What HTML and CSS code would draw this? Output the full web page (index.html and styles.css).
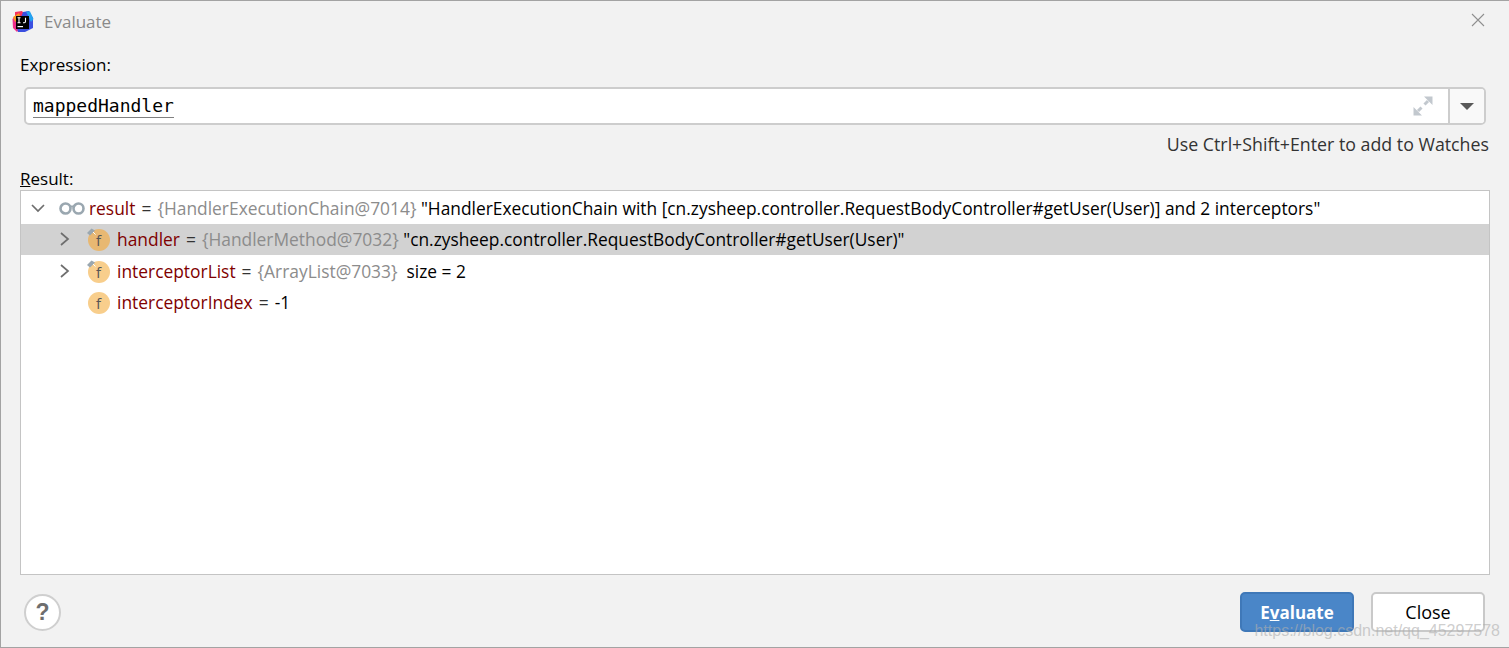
FILE: index.html
```html
<!DOCTYPE html>
<html lang="en">
<head>
<meta charset="utf-8">
<title>Evaluate</title>
<link rel="stylesheet" href="styles.css">
</head>
<body>
<div class="dialog">
  <header class="titlebar">
    <svg class="logo" width="22" height="22" viewBox="0 0 22 22">
      <path d="M3 1 L10 0 L13 4 L3 8Z" fill="#f5305f"/>
      <path d="M0.5 8 L4 4 L8 17 L5 21 L1 17Z" fill="#ee2f8a"/>
      <path d="M11 1 L17 0 L21 7 L21 17 L13 21 L6 21 L5 17Z" fill="#3b4fe0"/>
      <path d="M14 0.5 L18 0.5 L21.5 8 L19 11Z" fill="#23a3f0"/>
      <path d="M1 6 L7 2 L9 7 L3 11Z" fill="#f7941e"/>
      <rect x="4" y="5" width="13" height="13" fill="#000"/>
      <rect x="5.5" y="15" width="5.5" height="1.2" fill="#fff"/>
      <path d="M5.5 6.8h3M7 6.8v5M5.5 11.8h3M13.5 6.8v3.8q0 1.2-1.2 1.2h-1.3" fill="none" stroke="#fff" stroke-width="1.1"/>
    </svg>
    <span class="title">Evaluate</span>
    <svg class="close-x" width="14" height="14" viewBox="0 0 14 14"><path d="M1 1L13 13M13 1L1 13" stroke="#8f8f8f" stroke-width="1.1" fill="none"/></svg>
  </header>

  <main class="content">
    <label class="label expr-label">Expression:</label>
    <div class="expr-box">
      <div class="expr-input">
        <span class="expr-text">mappedHandler</span>
        <svg class="expand" width="20" height="20" viewBox="0 0 20 20">
          <path d="M11 0.5h8.500v8.500z M9 19.500h-8.500v-8.500z" fill="#c2c8ce"/>
          <path d="M15 5L11.500 8.500M5 15L8.500 11.500" stroke="#c2c8ce" stroke-width="3" fill="none"/>
        </svg>
      </div>
      <div class="expr-drop"><span class="tri"></span></div>
    </div>
    <div class="hint">Use Ctrl+Shift+Enter to add to Watches</div>
    <label class="label result-label"><u>R</u>esult:</label>

    <div class="tree">
      <div class="row lvl0">
        <svg class="arrow" width="14" height="14" viewBox="0 0 14 14"><path d="M1 4L7 10L13 4" fill="none" stroke="#6e6e6e" stroke-width="1.7"/></svg>
        <svg class="glasses" width="26" height="14" viewBox="0 0 26 14"><circle cx="6.500" cy="7.500" r="5" fill="none" stroke="#9aa7b0" stroke-width="2.600"/><circle cx="19.500" cy="7.500" r="5" fill="none" stroke="#9aa7b0" stroke-width="2.600"/><path d="M11 5.500h4" stroke="#9aa7b0" stroke-width="2"/></svg>
        <span class="name">result</span><span class="eq"> = </span><span class="ref">{HandlerExecutionChain@7014}</span><span class="val"> "HandlerExecutionChain with [cn.zysheep.controller.RequestBodyController#getUser(User)] and 2 interceptors"</span>
      </div>
      <div class="row lvl1 selected">
        <svg class="arrow" width="14" height="16" viewBox="0 0 14 16"><path d="M3 2L10 8L3 14" fill="none" stroke="#6e6e6e" stroke-width="1.7"/></svg>
        <span class="field">
          <svg width="26" height="26" viewBox="0 0 26 26"><circle cx="14" cy="14" r="11" fill="#e8b872"/><path d="M2 7L6.500 2.500L10 4.500L5 9.500Z" fill="#9aa7b0"/><path d="M8 6l2.500 2.500" stroke="#fff" stroke-width="1"/></svg>
          <i class="f">f</i>
        </span>
        <span class="name">handler</span><span class="eq"> = </span><span class="ref">{HandlerMethod@7032}</span><span class="val"> "cn.zysheep.controller.RequestBodyController#getUser(User)"</span>
      </div>
      <div class="row lvl1">
        <svg class="arrow" width="14" height="16" viewBox="0 0 14 16"><path d="M3 2L10 8L3 14" fill="none" stroke="#6e6e6e" stroke-width="1.7"/></svg>
        <span class="field">
          <svg width="26" height="26" viewBox="0 0 26 26"><circle cx="14" cy="14" r="11" fill="#f8ce8c"/><path d="M2 7L6.500 2.500L10 4.500L5 9.500Z" fill="#9aa7b0"/><path d="M8 6l2.500 2.500" stroke="#fff" stroke-width="1"/></svg>
          <i class="f">f</i>
        </span>
        <span class="name">interceptorList</span><span class="eq"> = </span><span class="ref">{ArrayList@7033}</span><span class="val">&nbsp; size = 2</span>
      </div>
      <div class="row lvl1">
        <span class="arrow-gap"></span>
        <span class="field">
          <svg width="26" height="26" viewBox="0 0 26 26"><circle cx="14" cy="14" r="11" fill="#f8ce8c"/></svg>
          <i class="f">f</i>
        </span>
        <span class="name">interceptorIndex</span><span class="eq"> = </span><span class="val">-1</span>
      </div>
    </div>
  </main>

  <footer class="footer">
    <button class="help">?</button>
    <div class="actions">
      <button class="btn primary">E<u>v</u>aluate</button>
      <button class="btn">Close</button>
    </div>
  </footer>
  <div class="watermark">https://blog.csdn.net/qq_45297578</div>
</div>
</body>
</html>
```

FILE: styles.css
```css
* { box-sizing: border-box; }
html, body { margin: 0; height: 100%; }
body { width: 1509px; height: 648px; overflow: hidden; background: #f2f2f2; font-family: "Open Sans", "Noto Sans", sans-serif; font-size: 17px; color: #000; }
.dialog { position: relative; width: 1509px; height: 648px; border-top: 1px solid #a3a3a3; border-left: 1px solid #a3a3a3; border-bottom: 1px solid #a3a3a3; background: #f2f2f2; display: flex; flex-direction: column; }
.titlebar { height: 41px; display: flex; align-items: center; padding: 0 24px 0 11px; flex: none; }
.logo { flex: none; }
.title { margin-left: 10px; color: #8a8a8a; font-size: 17px; flex: 1; }
.close-x { flex: none; margin-top: -4px; }
.content { flex: 1; padding: 0 19px; display: flex; flex-direction: column; min-height: 0; }
.label { display: block; line-height: 24px; }
.expr-label { height: 24px; margin-top: 11px; }
.expr-box { display: flex; height: 40px; margin: 10px 4px 0 4px; border: 2px solid #cdcdcd; border-radius: 5px; background: #fff; overflow: hidden; }
.expr-input { flex: 1; display: flex; align-items: center; justify-content: space-between; padding: 0 15px 0 7px; }
.expr-text { font-family: "DejaVu Sans Mono", monospace; font-size: 18px; line-height: 22px; border-bottom: 1px solid #808080; color: #000; }
.expand { flex: none; }
.expr-drop { width: 36px; flex: none; border-left: 2px solid #cdcdcd; background: #f9f9f9; display: flex; align-items: center; justify-content: center; }
.tri { width: 0; height: 0; border-left: 7px solid transparent; border-right: 7px solid transparent; border-top: 7px solid #595959; }
.hint { text-align: right; line-height: 24px; margin-top: 7px; padding-right: 1px; color: #333; font-size: 17.8px; }
.result-label { margin-top: 11px; height: 23px; }
.tree { height: 385px; background: #fff; border: 1px solid #c4c4c4; padding-top: 1px; flex: none; font-size: 17.4px; }
.row { height: 31.5px; display: flex; align-items: center; }
.lvl0 { padding-left: 10px; }
.lvl1 { padding-left: 37px; }
.selected { background: #d2d2d2; }
.arrow { flex: none; }
.arrow-gap { width: 14px; flex: none; }
.glasses { flex: none; margin-left: 14px; margin-right: 4px; }
.field { position: relative; width: 26px; height: 26px; margin: 0 6px 0 13px; flex: none; }
.field svg { display: block; }
.f { position: absolute; left: 11px; top: 3px; font-style: normal; font-size: 15px; line-height: 22px; color: #555; }
.name, .eq, .ref, .val { white-space: pre; }
.name { color: #7f0000; }
.eq { color: #333; margin: 0 1.5px; }
.ref { color: #8c8c8c; }
.val { color: #000; font-size: 17.35px; }
.footer { height: 72px; flex: none; display: flex; align-items: flex-start; justify-content: space-between; padding: 17px 24px 0 23px; }
.help { width: 37px; height: 37px; margin-top: 2px; border-radius: 50%; border: 2px solid #cfcfcf; background: #fff; font: bold 23px "Liberation Sans", sans-serif; color: #6e6e6e; padding: 0; }
.actions { display: flex; gap: 17px; }
.btn { width: 114px; height: 40px; border-radius: 5px; border: 2px solid #c9c9c9; background: #fff; font-family: inherit; font-size: 18px; color: #000; padding: 0; }
.btn.primary { background: #4a86c8; border-color: #3f78b8; color: #fff; font-weight: 700; font-size: 17px; }
.watermark { position: absolute; right: 9px; bottom: 7px; font-family: "Liberation Sans", sans-serif; font-size: 16px; color: rgba(175,175,175,0.62); pointer-events: none; white-space: nowrap; }
```
